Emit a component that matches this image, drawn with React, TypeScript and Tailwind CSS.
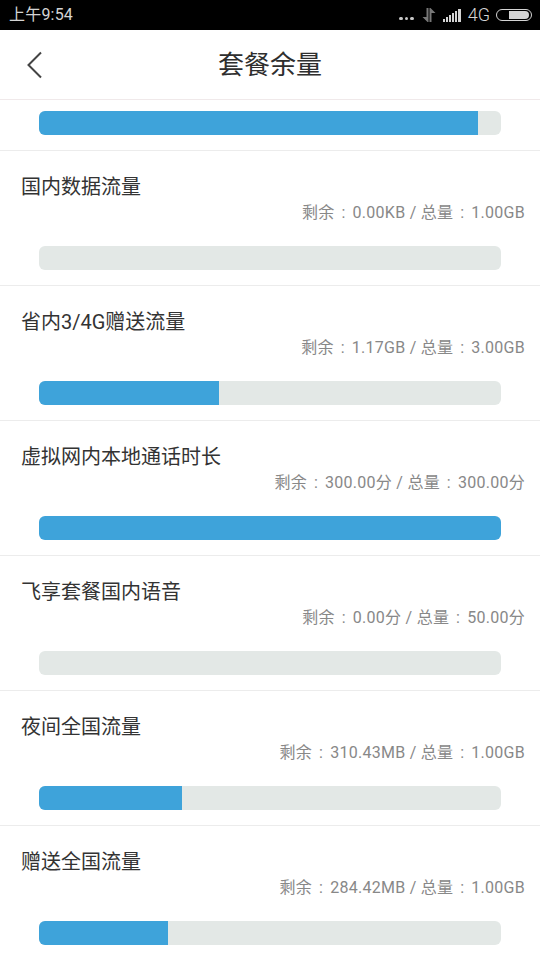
const rows = [
  { title: "国内数据流量", left: "0.00KB", right: "1.00GB", fill: 0 },
  { title: "省内3/4G赠送流量", left: "1.17GB", right: "3.00GB", fill: 180 },
  { title: "虚拟网内本地通话时长", left: "300.00分", right: "300.00分", fill: 462 },
  { title: "飞享套餐国内语音", left: "0.00分", right: "50.00分", fill: 0 },
  { title: "夜间全国流量", left: "310.43MB", right: "1.00GB", fill: 143 },
  { title: "赠送全国流量", left: "284.42MB", right: "1.00GB", fill: 129 },
];

function Bar({ fill }: { fill: number }) {
  return (
    <div className="mx-[39px] h-6 w-[462px] overflow-hidden rounded-md bg-[#e3e8e6]">
      <div className="h-full bg-[#3ea3da]" style={{ width: fill }} />
    </div>
  );
}

function Colon() {
  return <span className="inline-block w-[18px] text-center">:</span>;
}

function StatusBar() {
  return (
    <div className="flex h-[30px] items-center justify-between bg-black pl-[9px] pr-2 text-[#d4d4d4]">
      <span className="text-[16px] leading-none tracking-[0.2px]">上午9:54</span>
      <div className="flex items-center">
        <div className="mr-[8px] mt-[7px] flex gap-[2px]">
          <span className="size-[3.5px] rounded-full bg-[#c8c8c8]" />
          <span className="size-[3.5px] rounded-full bg-[#c8c8c8]" />
          <span className="size-[3.5px] rounded-full bg-[#c8c8c8]" />
        </div>
        <svg width="14" height="14" viewBox="0 0 14 14" className="mr-[7px]" fill="#777">
          <path d="M4.500 0H6.500V14H5.500L0.500 9H4.500zM7.500 0H8.500L13.500 5H9.500V14H7.500z" />
        </svg>
        <svg width="20" height="13" viewBox="0 0 20 13" className="mr-[5px]" fill="#d4d4d4">
          <rect x="0" y="10" width="2" height="3" />
          <rect x="3" y="8" width="2" height="5" />
          <rect x="6" y="6" width="2" height="7" />
          <rect x="9" y="4" width="2" height="9" />
          <rect x="12" y="2" width="2" height="11" />
          <rect x="15" y="0" width="3" height="13" />
        </svg>
        <span className="mr-[6px] text-[18px] font-light leading-none">4G</span>
        <div className="mb-[1px] flex h-[12px] w-[36px] items-center rounded-full border border-[#d4d4d4] px-[2px]">
          <div className="ml-[10px] h-[8px] w-[20px] rounded-r-full bg-[#d4d4d4]" />
        </div>
      </div>
    </div>
  );
}

export default function App() {
  return (
    <div className="h-[960px] w-[540px] overflow-hidden bg-white font-['Roboto','Noto_Sans_CJK_SC',sans-serif]">
      <StatusBar />
      <div className="relative flex h-[70px] items-center justify-center border-b border-[#f0e9ea]">
        <svg width="18" height="28" viewBox="0 0 18 28" fill="none" stroke="#444" strokeWidth="2" className="absolute left-[26px] top-[21px]">
          <path d="M15 1.500 2.500 14 15 26.500" />
        </svg>
        <h1 className="text-[26px] font-normal leading-none text-[#2e2e2e]">套餐余量</h1>
      </div>
      <div className="flex h-[51px] items-start border-b border-[#ececec] pt-[11px]">
        <Bar fill={439} />
      </div>
      {rows.map((row) => (
        <div key={row.title} className="h-[135px] border-b border-[#ececec] pt-[24px]">
          <div className="pl-[21px] text-[20px] leading-6 text-[#333]">{row.title}</div>
          <div className="mb-[21px] mt-[2px] pr-[15px] text-right text-[16px] leading-6 tracking-[0.27px] text-[#888]">
            剩余<Colon />{row.left} / 总量<Colon />{row.right}
          </div>
          <Bar fill={row.fill} />
        </div>
      ))}
    </div>
  );
}
